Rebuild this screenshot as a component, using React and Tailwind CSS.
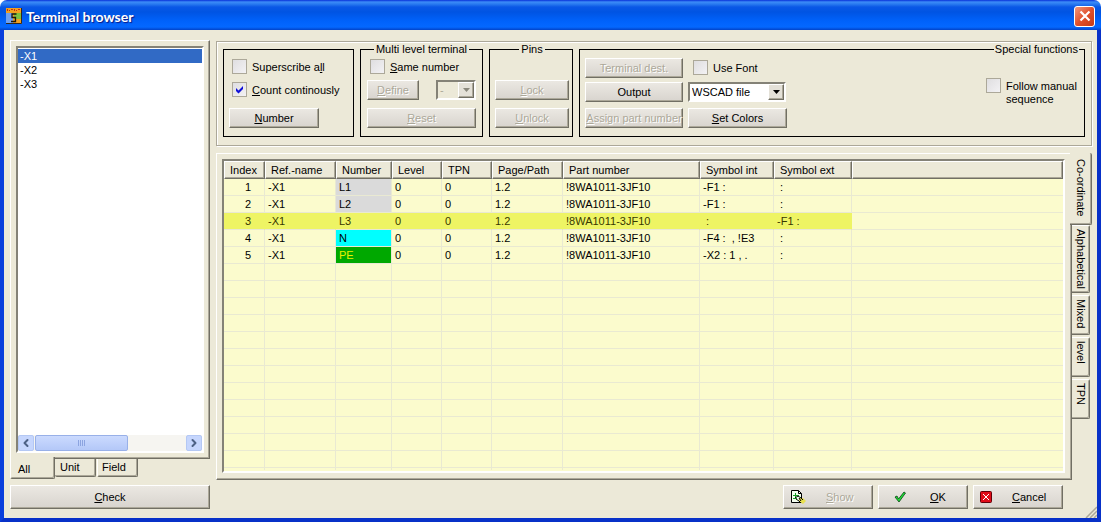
import React, { useState } from 'react';
import { ChevronLeft, ChevronRight } from 'lucide-react';

const raised = "border border-t-white border-l-white border-r-[#716f64] border-b-[#716f64] shadow-[inset_-1px_-1px_0_#aca899]";
const sunken = "border-2 border-t-[#848277] border-l-[#848277] border-r-white border-b-white";

const columns = [
  { name: 'Index', width: 'w-[41px]' },
  { name: 'Ref.-name', width: 'w-[71px]' },
  { name: 'Number', width: 'w-[56px]' },
  { name: 'Level', width: 'w-[50px]' },
  { name: 'TPN', width: 'w-[50px]' },
  { name: 'Page/Path', width: 'w-[71px]' },
  { name: 'Part number', width: 'w-[137px]' },
  { name: 'Symbol int', width: 'w-[74px]' },
  { name: 'Symbol ext', width: 'w-[78px]' },
  { name: '', width: '' },
];

const terminals = [
  { cells: ['1', '-X1', 'L1', '0', '0', '1.2', '!8WA1011-3JF10', '-F1 :', '\u00a0:'], color: 'bg-[#dadada]' },
  { cells: ['2', '-X1', 'L2', '0', '0', '1.2', '!8WA1011-3JF10', '-F1 :', '\u00a0:'], color: 'bg-[#dadada]' },
  { cells: ['3', '-X1', 'L3', '0', '0', '1.2', '!8WA1011-3JF10', '\u00a0:', '-F1 :'], color: '', selected: true },
  { cells: ['4', '-X1', 'N', '0', '0', '1.2', '!8WA1011-3JF10', '-F4 :\u00a0 , !E3', '\u00a0:'], color: 'bg-[#00ffff]' },
  { cells: ['5', '-X1', 'PE', '0', '0', '1.2', '!8WA1011-3JF10', '-X2 : 1 , .', '\u00a0:'], color: 'bg-[#00a800] text-[#e8f000]' },
];

const sideTabs = [
  { name: 'Co-ordinate', height: 'h-[72px]' },
  { name: 'Alphabetical', height: 'h-[68px]' },
  { name: 'Mixed', height: 'h-[40px]' },
  { name: 'level', height: 'h-[40px]' },
  { name: 'TPN', height: 'h-[40px]' },
];

const Button = ({ children, disabled, className = '' }) => (
  <button
    type="button"
    disabled={disabled}
    className={`${raised} flex items-center justify-center whitespace-nowrap bg-linear-to-b from-[#ebe8e2] to-[#d8d4ce] disabled:text-[#aca899] disabled:[text-shadow:1px_1px_0_#fff] ${className}`}
  >
    {children}
  </button>
);

const Check = ({ children, checked = false, className = '' }) => {
  const [on, setOn] = useState(checked);
  return (
    <label className={`flex items-start gap-[5px] ${className}`}>
      <span className="grid shrink-0">
        <input
          type="checkbox"
          checked={on}
          onChange={() => setOn(!on)}
          className="[grid-area:1/1] size-[15px] appearance-none border border-[#aca899] bg-linear-to-br from-[#dfdee0] to-[#f3f2f4]"
        />
        {on && (
          <svg viewBox="0 0 15 15" className="pointer-events-none [grid-area:1/1] size-[15px]">
            <path d="M4 6v3l2.500 2.500L11 7V4L6.500 8.500z" fill="#1010d8" />
          </svg>
        )}
      </span>
      <span className="leading-[13px] pt-[2px]">{children}</span>
    </label>
  );
};

const Combo = ({ label, value, disabled, className = '' }) => (
  <span className={`relative flex h-5 ${className}`}>
    <select
      aria-label={label}
      disabled={disabled}
      className={`${sunken} w-full appearance-none bg-white pl-[2px] opacity-100 disabled:bg-[#ece9d8] disabled:text-[#aca899]`}
    >
      <option>{value}</option>
    </select>
    <span className={`${raised} pointer-events-none absolute top-[2px] right-[2px] bottom-[2px] flex w-4 items-center justify-center bg-[#e4e1d8]`}>
      <svg viewBox="0 0 7 4" className="h-1 w-[7px]">
        <path d="M0 0h7L3.500 4z" fill={disabled ? '#8a887c' : '#000'} />
      </svg>
    </span>
  </span>
);

const TitleBar = () => (
  <header className="flex h-[30px] shrink-0 items-center rounded-t-[7px] bg-[linear-gradient(#0831d9_0px,#3c8cf8_2px,#2a7bf0_4px,#0a58e6_7px,#0054e3_12px,#0062fb_21px,#0468ff_27px,#0243c8_30px)] pt-[2px] pr-[6px] pl-[6px]">
    <svg viewBox="0 0 16 16" className="mr-1 size-4">
      <rect width="16" height="16" fill="#f0a020" />
      <path d="M0 5h7v11H0z" fill="#6fa0f0" />
      <path d="M8 5h8v6H8z" fill="#7cc040" />
      <path d="M1 1h1v2H1zM3 2h1v1H3zM5 1h2v1H5zM8 1h1v2H8zM10 2h1v1h-1zM12 1h2v1h-2z" fill="#c83010" />
      <path d="M10.500 6H6v3.500h3.500v4H5" fill="none" stroke="#201808" strokeWidth="1.300" />
      <path d="M15.500 0v15.500H0" fill="none" stroke="#302820" />
    </svg>
    <h1 className="font-['Lato',sans-serif] text-[14px] font-bold text-white [text-shadow:1px_1px_1px_#0a1883]">Terminal browser</h1>
    <button type="button" aria-label="Close" className="ml-auto flex size-[21px] items-center justify-center rounded-[3px] border border-white bg-linear-to-br from-[#f0967a] via-[#e0502c] to-[#c43a14]">
      <svg viewBox="0 0 12 12" className="size-3">
        <path d="M1.500 1.500l9 9M10.500 1.500l-9 9" stroke="#fff" strokeWidth="2.200" />
      </svg>
    </button>
  </header>
);

const TerminalList = () => (
  <aside className="flex w-[200px] shrink-0 flex-col">
    <div className="flex flex-1 flex-col border border-t-white border-l-white border-r-[#716f64] border-b-[#716f64] p-[5px] shadow-[inset_-1px_-1px_0_#aca899]">
      <div className={`${sunken} flex flex-1 flex-col bg-white pt-px`}>
        <ul role="listbox" aria-label="Terminals" className="flex-1 leading-[14px]">
          <li role="option" aria-selected="true" className="bg-[#316ac5] pl-[2px] text-white">-X1</li>
          <li role="option" aria-selected="false" className="pl-[2px]">-X2</li>
          <li role="option" aria-selected="false" className="pl-[2px]">-X3</li>
        </ul>
        <div className="flex h-4 gap-px bg-[#f6f5f1]">
          <button type="button" aria-label="Scroll left" className="flex w-4 items-center justify-center rounded-[2px] border border-[#b4c8f4] bg-[#c6d6fd] text-[#4d6185]">
            <ChevronLeft size={12} strokeWidth={4} />
          </button>
          <div className="flex flex-1">
            <div className="flex w-[93px] items-center justify-center gap-px rounded-[2px] border border-[#98b0e8] bg-linear-to-b from-[#cbdafe] to-[#b4c8f8]">
              <i className="h-[6px] w-px bg-[#8ca4e0]" />
              <i className="h-[6px] w-px bg-[#8ca4e0]" />
              <i className="h-[6px] w-px bg-[#8ca4e0]" />
              <i className="h-[6px] w-px bg-[#8ca4e0]" />
            </div>
          </div>
          <button type="button" aria-label="Scroll right" className="flex w-4 items-center justify-center rounded-[2px] border border-[#b4c8f4] bg-[#c6d6fd] text-[#4d6185]">
            <ChevronRight size={12} strokeWidth={4} />
          </button>
        </div>
      </div>
    </div>
    <div role="tablist" className="flex h-5 items-start">
      <button type="button" role="tab" aria-selected="true" className="relative -mt-[2px] h-[22px] w-[45px] rounded-b-[2px] border border-t-0 border-l-white border-r-[#716f64] border-b-[#716f64] bg-[#ece9d8] pt-1 pl-[7px] text-left shadow-[inset_-1px_-1px_0_#aca899]">All</button>
      <button type="button" role="tab" aria-selected="false" className="h-[18px] w-[41px] rounded-b-[2px] border border-t-0 border-l-0 border-[#716f64] pl-[5px] text-left shadow-[inset_-1px_-1px_0_#aca899]">Unit</button>
      <button type="button" role="tab" aria-selected="false" className="ml-px h-[18px] w-[41px] rounded-b-[2px] border border-t-0 border-l-white border-r-[#716f64] border-b-[#716f64] pl-1 text-left shadow-[inset_-1px_-1px_0_#aca899]">Field</button>
    </div>
    <Button className="mt-[6px] h-6"><span><u>C</u>heck</span></Button>
  </aside>
);

const Toolbar = () => (
  <section className="flex gap-[6px] border border-[#aca899] px-[6px] pt-px pb-2 shadow-[inset_1px_1px_0_#fff,1px_1px_0_#fff]">
    <div role="group" aria-label="Numbering" className="mt-[6px] flex w-[131px] flex-col items-start border border-black px-[5px] pt-[9px]">
      <Check className="ml-[3px]">Superscribe a<u>l</u>l</Check>
      <Check checked className="mt-2 ml-[3px]"><u>C</u>ount continously</Check>
      <Button className="mt-[11px] h-5 w-[90px]"><span><u>N</u>umber</span></Button>
    </div>
    <fieldset className="w-[123px] border border-black px-[6px] pb-2">
      <legend className="mx-auto px-[2px] leading-[13px]">Multi level terminal</legend>
      <Check className="mt-[3px] ml-[3px]"><u>S</u>ame number</Check>
      <div className="mt-[6px] flex justify-between">
        <Button disabled className="h-5 w-[52px]"><span><u>D</u>efine</span></Button>
        <Combo disabled label="Separator" value="-" className="w-10" />
      </div>
      <Button disabled className="mt-2 h-5 w-full"><span><u>R</u>eset</span></Button>
    </fieldset>
    <fieldset className="w-[84px] border border-black pr-[3px] pl-[5px]">
      <legend className="mx-auto px-[2px] leading-[13px]">Pins</legend>
      <Button disabled className="mt-6 h-5 w-full"><span><u>L</u>ock</span></Button>
      <Button disabled className="mt-2 h-5 w-full"><span><u>U</u>nlock</span></Button>
    </fieldset>
    <fieldset className="flex-1 border border-black px-[5px]">
      <legend className="ml-auto px-px leading-[13px]">Special functions</legend>
      <div className="flex gap-[5px] pt-[2px]">
        <div className="flex w-[98px] flex-col">
          <Button disabled className="h-5">Terminal dest.</Button>
          <Button className="mt-1 h-5">Output</Button>
          <Button disabled className="mt-[6px] h-5"><span><u>A</u>ssign part number</span></Button>
        </div>
        <div className="flex w-[99px] flex-col">
          <Check className="mt-[2px] ml-[5px]">Use Font</Check>
          <Combo label="Output target" value="WSCAD file" className="mt-[7px] w-[98px]" />
          <Button className="mt-[6px] h-5"><span><u>S</u>et Colors</span></Button>
        </div>
        <Check className="mt-5 ml-auto w-[93px]">Follow manual sequence</Check>
      </div>
    </fieldset>
  </section>
);

const TerminalTable = () => (
  <section className="flex flex-1">
    <div className="flex flex-1 border border-t-white border-l-white border-r-[#716f64] border-b-[#716f64] p-[5px] pr-[6px] pb-[6px] shadow-[inset_-1px_-1px_0_#aca899]">
      <div className={`${sunken} flex-1 bg-[#fbfbcd]`}>
        <table className="w-full table-fixed border-separate border-spacing-0">
          <thead>
            <tr>
              {columns.map((column) => (
                <th key={column.name} scope="col" className={`${column.width} h-[18px] border border-t-white border-l-white border-r-[#716f64] border-b-[#716f64] bg-[#ece9d8] pl-[5px] text-left leading-[14px] font-normal whitespace-nowrap shadow-[inset_-1px_-1px_0_#aca899]`}>
                  {column.name}
                </th>
              ))}
            </tr>
          </thead>
          <tbody>
            {terminals.map((row) => (
              <tr key={row.cells[0]} className={row.selected ? 'text-[#383800]' : ''}>
                {row.cells.map((cell, i) => (
                  <td
                    key={columns[i].name}
                    className={`h-[17px] border-r border-b border-[#e9e9d2] leading-[15px] whitespace-nowrap ${i === 0 ? 'pl-2 text-center' : 'pl-[3px]'} ${row.selected ? 'border-r-[#eef464] bg-[#eef464]' : ''} ${i === 2 ? row.color : ''}`}
                  >
                    {cell}
                  </td>
                ))}
                <td className="border-b border-[#e9e9d2]" />
              </tr>
            ))}
            {Array.from({ length: 12 }, (_, n) => (
              <tr key={n}>
                {columns.map((column, i) => (
                  <td key={column.name} className={`h-[17px] border-b border-[#e9e9d2] ${i < 9 ? 'border-r' : ''}`} />
                ))}
              </tr>
            ))}
            <tr>
              {columns.map((column, i) => (
                <td key={column.name} className={`h-[2px] border-[#e9e9d2] ${i < 9 ? 'border-r' : ''}`} />
              ))}
            </tr>
          </tbody>
        </table>
      </div>
    </div>
    <div role="tablist" aria-orientation="vertical" className="flex w-5 flex-col items-start">
      {sideTabs.map((tab, i) => (
        <button
          key={tab.name}
          type="button"
          role="tab"
          aria-selected={i === 0}
          className={`${tab.height} relative flex items-center rounded-r-[2px] border border-l-0 border-r-[#716f64] border-b-[#716f64] bg-[#ece9d8] shadow-[inset_-1px_-1px_0_#aca899] [writing-mode:vertical-rl] ${i === 0 ? '-ml-[2px] w-[22px] border-t-0 pt-[6px]' : 'mb-[2px] w-[18px] border-t-white pt-[3px]'}`}
        >
          <span className="h-full text-left leading-[15px]">{tab.name}</span>
        </button>
      ))}
    </div>
  </section>
);

const DialogButtons = () => (
  <div className="mt-[5px] flex justify-end gap-[5px] pr-[29px]">
    <Button disabled className="h-6 w-[90px]">
      <svg viewBox="0 0 16 16" className="ml-[6px] size-4">
        <path d="M1.500 1.500h7l3 3v9h-10z" fill="#f4fff0" stroke="#000" />
        <path d="M8.500 1.500v3h3" fill="none" stroke="#000" />
        <path d="M3 6.500h6M5.500 4v6M3 9.500h4" stroke="#18a028" />
        <path d="M9 9h4l3 3-3 3-4-3z" fill="#e8e050" />
        <path d="M5 9l3-2 3 2 2 2M6 10l3 2 2 2M9 9l2 3" fill="none" stroke="#000" />
      </svg>
      <span className="mr-auto ml-5"><u>S</u>how</span>
    </Button>
    <Button className="h-6 w-[90px]">
      <svg viewBox="0 0 12 12" className="ml-[15px] size-3">
        <path d="M1 6l2-1 1.500 3L10 1l1.500 1-6.500 9z" fill="#20e038" stroke="#064010" strokeWidth=".8" />
      </svg>
      <span className="mr-auto ml-6"><u>O</u>K</span>
    </Button>
    <Button className="h-6 w-[90px]">
      <svg viewBox="0 0 12 12" className="ml-[6px] size-3">
        <rect x=".5" y=".5" width="11" height="11" rx="1" fill="#e00c18" stroke="#600008" />
        <path d="M3 3l6 6M9 3L3 9" stroke="#fff" />
      </svg>
      <span className="mr-auto ml-5"><u>C</u>ancel</span>
    </Button>
  </div>
);

const App = () => (
  <div className="flex min-h-screen flex-col bg-white font-['Liberation_Sans',Arial,sans-serif] text-[11px] text-black">
    <TitleBar />
    <main className="relative flex flex-1 gap-[6px] border-4 border-t-0 border-[#0a3fdc] border-r-[#0831c8] border-b-[#0831c8] bg-[#ece9d8] pt-[10px] pr-[5px] pb-[9px] pl-[6px]">
      <TerminalList />
      <div className="flex min-w-0 flex-1 flex-col pt-px">
        <Toolbar />
        <div className="mt-[7px] flex flex-1 flex-col">
          <TerminalTable />
          <DialogButtons />
        </div>
      </div>
      <svg viewBox="0 0 12 12" className="absolute right-0 bottom-0 size-3">
        <path d="M1 12L12 1M5 12l7-7M9 12l3-3" stroke="#aca899" strokeWidth="1.500" />
      </svg>
    </main>
  </div>
);

export default App;
